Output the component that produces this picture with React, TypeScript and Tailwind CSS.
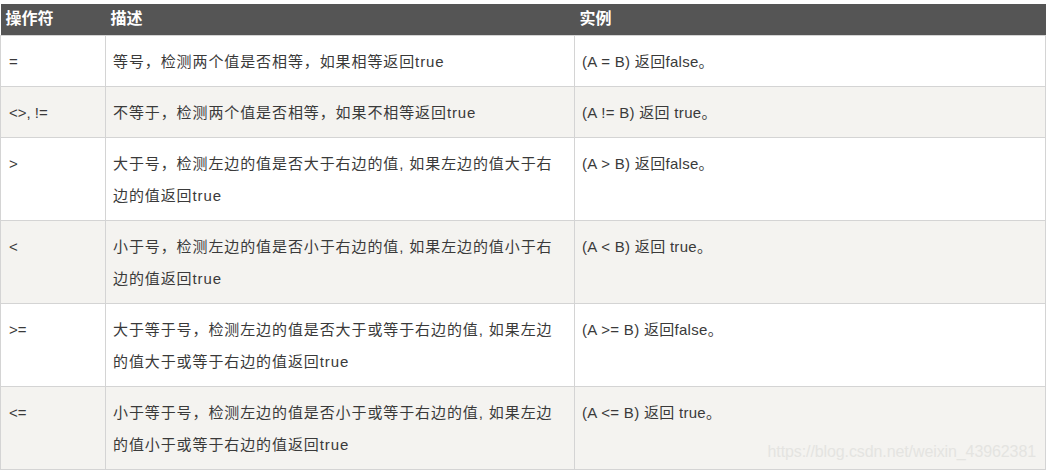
import React from 'react';

type Row = {
  op: string;
  desc: string[];
  example: string;
};

const rows: Row[] = [
  { op: '=', desc: ['等号，检测两个值是否相等，如果相等返回true'], example: '(A = B) 返回false。' },
  { op: '<>, !=', desc: ['不等于，检测两个值是否相等，如果不相等返回true'], example: '(A != B) 返回 true。' },
  { op: '>', desc: ['大于号，检测左边的值是否大于右边的值, 如果左边的值大于右', '边的值返回true'], example: '(A > B) 返回false。' },
  { op: '<', desc: ['小于号，检测左边的值是否小于右边的值, 如果左边的值小于右', '边的值返回true'], example: '(A < B) 返回 true。' },
  { op: '>=', desc: ['大于等于号，检测左边的值是否大于或等于右边的值, 如果左边', '的值大于或等于右边的值返回true'], example: '(A >= B) 返回false。' },
  { op: '<=', desc: ['小于等于号，检测左边的值是否小于或等于右边的值, 如果左边', '的值小于或等于右边的值返回true'], example: '(A <= B) 返回 true。' },
];

const font = { fontFamily: '"Liberation Sans", "Noto Sans CJK SC", sans-serif' };

export default function App() {
  return (
    <div className="relative w-[1046px] h-[470px] bg-white pt-[4px]" style={font}>
      <table className="w-[1045px] border-collapse table-fixed text-[15px] text-[#3a3a3a]">
        <colgroup>
          <col className="w-[105px]" />
          <col className="w-[469px]" />
          <col className="w-[471px]" />
        </colgroup>
        <thead>
          <tr className="bg-[#555555] h-[31px] text-white text-[16px] font-bold">
            <th className="text-left pl-[5px] font-bold">操作符</th>
            <th className="text-left pl-[5px] font-bold">描述</th>
            <th className="text-left pl-[5px] font-bold">实例</th>
          </tr>
        </thead>
        <tbody>
          {rows.map((r, i) => (
            <tr key={i} className={i % 2 === 1 ? 'bg-[#f4f3f0]' : 'bg-white'}>
              <td className="align-top border border-[#d4d4d4] pl-[8px] pr-[8px] pt-[10px] pb-[8px] leading-[32px]">{r.op}</td>
              <td className="align-top border border-[#d4d4d4] pl-[7px] pr-[4px] pt-[10px] pb-[8px] leading-[32px] whitespace-nowrap tracking-[0.9px]">
                {r.desc.map((line, j) => (
                  <div key={j}>{line}</div>
                ))}
              </td>
              <td className="align-top border border-[#d4d4d4] pl-[7px] pr-[8px] pt-[10px] pb-[8px] leading-[32px] tracking-[0.3px]">{r.example}</td>
            </tr>
          ))}
        </tbody>
      </table>
      <div className="absolute right-[10px] bottom-[6px] text-[16px] tracking-[-0.1px] text-[#e4e4e1]">
        https://blog.csdn.net/weixin_43962381
      </div>
    </div>
  );
}
